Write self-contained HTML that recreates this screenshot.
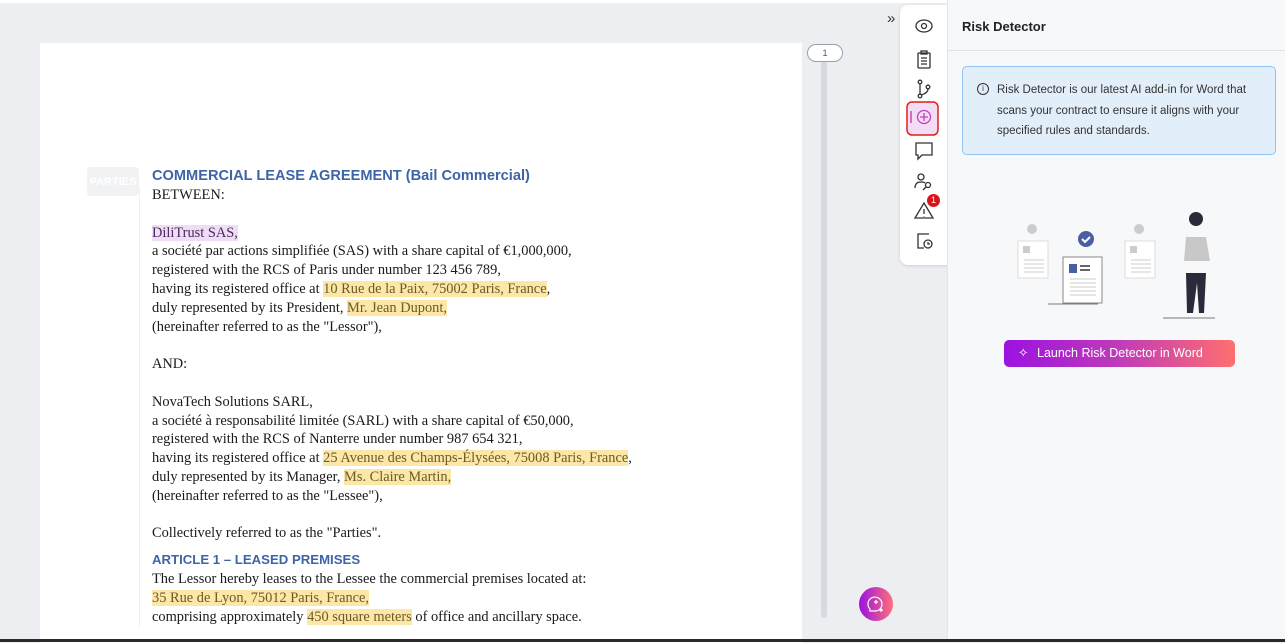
<!DOCTYPE html>
<html><head><meta charset="utf-8"><style>
*{margin:0;padding:0;box-sizing:border-box}
body{width:1285px;height:642px;overflow:hidden;background:#eceef1;font-family:"Liberation Sans",sans-serif;position:relative}
.page{position:absolute;left:40px;top:43px;width:762px;height:600px;background:#fff}
.doc{position:absolute;left:152px;top:0;font-family:"Liberation Serif",serif;font-size:14.4px;color:#1a1a1a;line-height:18.8px;white-space:nowrap}
.h{font-family:"Liberation Sans",sans-serif;font-weight:bold;color:#3e64a8;font-size:14.6px;line-height:20px}
.y{background:#fde7a6;color:#6b5a2a}
.p{background:#efdcf7;color:#4a2a5a}
.tag{position:absolute;left:87px;top:167px;width:52px;height:29px;background:#f1f2f4;border-radius:4px;color:#fff;font-size:11px;font-weight:bold;line-height:31px;text-align:center}
.vline{position:absolute;left:139px;top:188px;width:1px;height:440px;background:#eef0f2}
.sb{position:absolute;left:821px;top:60px;width:6px;height:558px;background:#d8dadf;border-radius:3px}
.pill{position:absolute;left:807px;top:44px;width:36px;height:18px;border:1px solid #9aa0a8;border-radius:9px;background:#fff;font-size:9px;color:#3e5a9a;text-align:center;line-height:16px}
.tb{position:absolute;left:900px;top:5px;width:48px;height:260px;background:#fff;border-radius:8px 0 0 8px;box-shadow:0 1px 3px rgba(0,0,0,.12)}
.right{position:absolute;left:947px;top:0;width:338px;height:642px;background:#f7f8fa;border-left:1px solid #e3e5e8}
.rh{height:51px;border-bottom:1px solid #e1e3e6;font-size:13px;font-weight:bold;color:#222;padding:19px 0 0 14px}
.info{position:absolute;left:14px;top:66px;width:314px;height:89px;background:#e3eefb;border:1px solid #90c2f2;border-radius:5px;font-size:11.5px;color:#333;line-height:20.5px;padding:13px 0 0 34px}
.btn{position:absolute;left:56px;top:340px;width:231px;height:27px;border-radius:5px;background:linear-gradient(90deg,#9b12e0,#c03bb8 50%,#ff6f6f);color:#fff;font-size:12.5px;line-height:27px;padding-left:33px}
.fab{position:absolute;left:859px;top:587px;width:34px;height:34px;border-radius:50%;background:linear-gradient(90deg,#9a12e0,#ff6f7a)}
.bot{position:absolute;left:0;top:639px;width:1285px;height:3px;background:#2a2a2a}
</style></head><body>
<div style="position:absolute;left:0;top:0;width:947px;height:3px;background:#fff"></div>
<div class="page"></div>
<div class="tag">PARTIES</div>
<div class="vline"></div>
<div class="doc" style="top:166px">
<div class="h">COMMERCIAL LEASE AGREEMENT (Bail Commercial)</div>
<div>BETWEEN:</div><div>&nbsp;</div>
<div><span class="p">DiliTrust SAS,</span></div>
<div>a société par actions simplifiée (SAS) with a share capital of €1,000,000,</div>
<div>registered with the RCS of Paris under number 123 456 789,</div>
<div>having its registered office at <span class="y">10 Rue de la Paix, 75002 Paris, France</span>,</div>
<div>duly represented by its President, <span class="y">Mr. Jean Dupont,</span></div>
<div>(hereinafter referred to as the "Lessor"),</div><div>&nbsp;</div>
<div>AND:</div><div>&nbsp;</div>
<div>NovaTech Solutions SARL,</div>
<div>a société à responsabilité limitée (SARL) with a share capital of €50,000,</div>
<div>registered with the RCS of Nanterre under number 987 654 321,</div>
<div>having its registered office at <span class="y">25 Avenue des Champs-Élysées, 75008 Paris, France</span>,</div>
<div>duly represented by its Manager, <span class="y">Ms. Claire Martin,</span></div>
<div>(hereinafter referred to as the "Lessee"),</div><div>&nbsp;</div>
<div>Collectively referred to as the "Parties".</div>
<div class="h" style="margin-top:7px;font-size:13.2px">ARTICLE 1 – LEASED PREMISES</div>
<div>The Lessor hereby leases to the Lessee the commercial premises located at:</div>
<div><span class="y">35 Rue de Lyon, 75012 Paris, France,</span></div>
<div>comprising approximately <span class="y">450 square meters</span> of office and ancillary space.</div>
</div>
<div class="sb"></div>
<div class="pill">1</div>
<div style="position:absolute;left:887px;top:10px;font-size:15px;color:#333">»</div>
<div class="tb">
<svg width="48" height="260" viewBox="0 0 48 260" fill="none" stroke="#333" stroke-width="1.3">
<ellipse cx="24" cy="21" rx="8" ry="6"/><circle cx="24" cy="21" r="2.5"/>
<rect x="18" y="48" width="12" height="15" rx="1"/><rect x="21" y="46" width="6" height="3"/><path d="M21 53h6M21 56h6M21 59h6"/>
<circle cx="20" cy="77" r="1.8"/><circle cx="20" cy="91" r="1.8"/><circle cx="28" cy="82" r="1.8"/><path d="M20 79v10M28 84q0 4-7 6"/>
<rect x="7" y="97" width="31" height="33" rx="5" fill="#f3dcf5" stroke="#e0201a" stroke-width="1.5"/>
<path d="M11 106v12" stroke="#d0309a"/><circle cx="24" cy="112" r="6.5" stroke="#c040c0"/><path d="M24 108v8M20 112h8" stroke="#c040c0"/>
<path d="M16 138h16v12h-10l-4 4v-4h-2z"/>
<circle cx="21" cy="172" r="3"/><path d="M15 183q0-6 6-6q3 0 4 1"/><circle cx="28" cy="180" r="2.5"/><path d="M26 182l-3 3"/>
<path d="M24 198l9 15h-18z"/><path d="M24 204v5M24 211v.5"/>
<path d="M29 229h-11v14h6"/><circle cx="28" cy="239" r="4"/><path d="M28 237v2h2"/>
</svg>
<div style="position:absolute;left:27px;top:189px;width:13px;height:13px;border-radius:50%;background:#d9141b;color:#fff;font-size:9px;text-align:center;line-height:13px">1</div>
</div>
<div class="right">
<div class="rh">Risk Detector</div>
<div class="info"><span style="position:absolute;left:14px;top:16px;width:12px;height:12px;border:1px solid #333;border-radius:50%;font-size:8px;text-align:center;line-height:10px">i</span>Risk Detector is our latest AI add-in for Word that<br>scans your contract to ensure it aligns with your<br>specified rules and standards.</div>
<svg style="position:absolute;left:60px;top:205px" width="240" height="120">
<circle cx="24" cy="24" r="5" fill="#ccc"/><rect x="10" y="36" width="30" height="37" fill="#fff" stroke="#ddd"/><rect x="15" y="41" width="7" height="7" fill="#ccc"/><path d="M16 55h20M16 59h20M16 63h20M16 67h20" stroke="#ccc"/>
<circle cx="131" cy="24" r="5" fill="#ccc"/><rect x="117" y="36" width="30" height="37" fill="#fff" stroke="#ddd"/><rect x="122" y="41" width="7" height="7" fill="#ccc"/><path d="M123 55h20M123 59h20M123 63h20M123 67h20" stroke="#ccc"/>
<circle cx="78" cy="34" r="8" fill="#4a5fa3"/><path d="M74 34l3 3 5-5" stroke="#fff" stroke-width="2" fill="none"/>
<rect x="55" y="52" width="39" height="46" fill="#fff" stroke="#888"/><rect x="61" y="59" width="8" height="9" fill="#4a5fa3"/><path d="M72 61h10M72 65h10" stroke="#333" stroke-width="1.5"/><path d="M62 74h26M62 78h26M62 82h26M62 86h26M62 90h26" stroke="#ccc"/>
<path d="M40 99h50M155 113h52" stroke="#777"/>
<circle cx="188" cy="14" r="7" fill="#2a2a3a"/><path d="M178 32h20l4 24h-26z" fill="#c8c8c8"/><path d="M178 68h20l-2 40h-5l-2-30-4 30h-6z" fill="#2a2a3a"/>
</svg>
<div class="btn"><span style="position:absolute;left:14px;top:0">✧</span>Launch Risk Detector in Word</div>
</div>
<div class="fab"><svg width="34" height="34" fill="none" stroke="#fff" stroke-width="1.2"><path d="M11 22a7 7 0 1 1 6 2h-6z"/><path d="M17 13v4M15 15h4M22 21v4M20 23h4"/></svg></div>
<div class="bot"></div>
</body></html>
